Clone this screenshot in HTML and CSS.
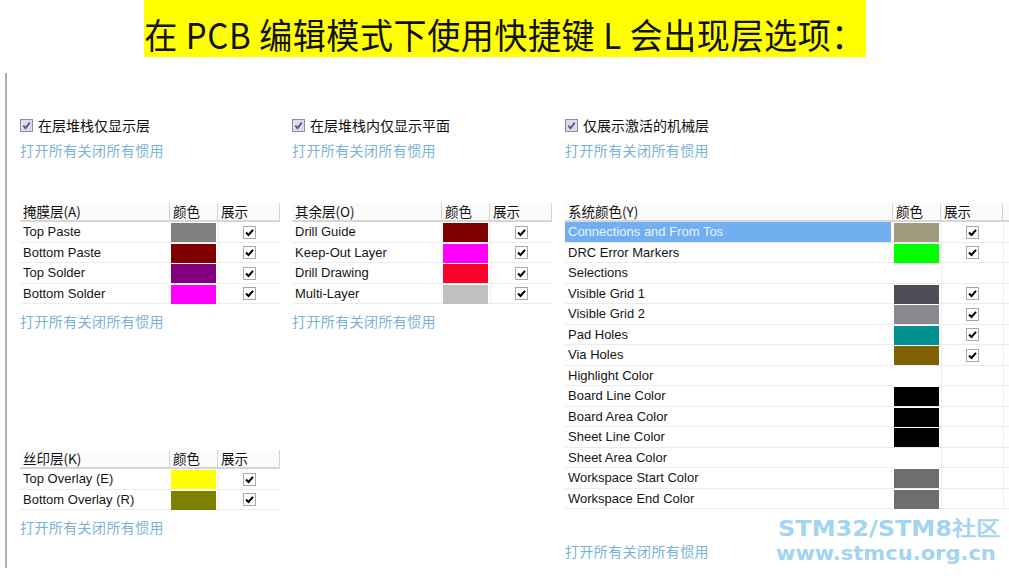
FILE: index.html
```html
<!DOCTYPE html>
<html lang="zh-CN">
<head>
<meta charset="utf-8">
<title>PCB 层选项</title>
<link rel="stylesheet" href="styles.css">
</head>
<body>
<div class="banner"><span class="banner-text">在 PCB 编辑模式下使用快捷键 L 会出现层选项：</span></div>

<div class="panel">
  <!-- Column 1 -->
  <div class="col">
    <div class="opt"><svg class="optbox" width="13" height="13" viewBox="0 0 13 13"><rect x=".5" y=".5" width="12" height="12" fill="#dcdde6" stroke="#8b8d9c"/><path d="M3.3 6.6l2.2 2.6 4.2-5.6" fill="none" stroke="#4b5a96" stroke-width="1.8"/></svg><span>在层堆栈仅显示层</span></div>
    <div class="link link-top">打开所有关闭所有惯用</div>

    <div class="tbl t1">
      <div class="hdr"><div class="c">掩膜层(A)</div><div class="c">颜色</div><div class="c">展示</div></div>
      <div class="row"><div class="n">Top Paste</div><div class="cc"><div class="sw" style="background:#808080"></div></div><div class="sc"><svg width="13" height="13" viewBox="0 0 13 13"><rect x=".5" y=".5" width="12" height="12" fill="#fff" stroke="#a8a8a8"/><path d="M3 6.5l2.5 2.5 4.5-5.2" fill="none" stroke="#000" stroke-width="2"/></svg></div></div>
      <div class="row"><div class="n">Bottom Paste</div><div class="cc"><div class="sw" style="background:#800000"></div></div><div class="sc"><svg width="13" height="13" viewBox="0 0 13 13"><rect x=".5" y=".5" width="12" height="12" fill="#fff" stroke="#a8a8a8"/><path d="M3 6.5l2.5 2.5 4.5-5.2" fill="none" stroke="#000" stroke-width="2"/></svg></div></div>
      <div class="row"><div class="n">Top Solder</div><div class="cc"><div class="sw" style="background:#800080"></div></div><div class="sc"><svg width="13" height="13" viewBox="0 0 13 13"><rect x=".5" y=".5" width="12" height="12" fill="#fff" stroke="#a8a8a8"/><path d="M3 6.5l2.5 2.5 4.5-5.2" fill="none" stroke="#000" stroke-width="2"/></svg></div></div>
      <div class="row"><div class="n">Bottom Solder</div><div class="cc"><div class="sw" style="background:#ff00ff"></div></div><div class="sc"><svg width="13" height="13" viewBox="0 0 13 13"><rect x=".5" y=".5" width="12" height="12" fill="#fff" stroke="#a8a8a8"/><path d="M3 6.5l2.5 2.5 4.5-5.2" fill="none" stroke="#000" stroke-width="2"/></svg></div></div>
    </div>
    <div class="link link-after">打开所有关闭所有惯用</div>

    <div class="tbl t1 silk">
      <div class="hdr"><div class="c">丝印层(K)</div><div class="c">颜色</div><div class="c">展示</div></div>
      <div class="row"><div class="n">Top Overlay (E)</div><div class="cc"><div class="sw" style="background:#ffff00"></div></div><div class="sc"><svg width="13" height="13" viewBox="0 0 13 13"><rect x=".5" y=".5" width="12" height="12" fill="#fff" stroke="#a8a8a8"/><path d="M3 6.5l2.5 2.5 4.5-5.2" fill="none" stroke="#000" stroke-width="2"/></svg></div></div>
      <div class="row"><div class="n">Bottom Overlay (R)</div><div class="cc"><div class="sw" style="background:#808000"></div></div><div class="sc"><svg width="13" height="13" viewBox="0 0 13 13"><rect x=".5" y=".5" width="12" height="12" fill="#fff" stroke="#a8a8a8"/><path d="M3 6.5l2.5 2.5 4.5-5.2" fill="none" stroke="#000" stroke-width="2"/></svg></div></div>
    </div>
    <div class="link link-after">打开所有关闭所有惯用</div>
  </div>

  <!-- Column 2 -->
  <div class="col">
    <div class="opt"><svg class="optbox" width="13" height="13" viewBox="0 0 13 13"><rect x=".5" y=".5" width="12" height="12" fill="#dcdde6" stroke="#8b8d9c"/><path d="M3.3 6.6l2.2 2.6 4.2-5.6" fill="none" stroke="#4b5a96" stroke-width="1.8"/></svg><span>在层堆栈内仅显示平面</span></div>
    <div class="link link-top">打开所有关闭所有惯用</div>

    <div class="tbl t1">
      <div class="hdr"><div class="c">其余层(O)</div><div class="c">颜色</div><div class="c">展示</div></div>
      <div class="row"><div class="n">Drill Guide</div><div class="cc"><div class="sw" style="background:#800000"></div></div><div class="sc"><svg width="13" height="13" viewBox="0 0 13 13"><rect x=".5" y=".5" width="12" height="12" fill="#fff" stroke="#a8a8a8"/><path d="M3 6.5l2.5 2.5 4.5-5.2" fill="none" stroke="#000" stroke-width="2"/></svg></div></div>
      <div class="row"><div class="n">Keep-Out Layer</div><div class="cc"><div class="sw" style="background:#ff00ff"></div></div><div class="sc"><svg width="13" height="13" viewBox="0 0 13 13"><rect x=".5" y=".5" width="12" height="12" fill="#fff" stroke="#a8a8a8"/><path d="M3 6.5l2.5 2.5 4.5-5.2" fill="none" stroke="#000" stroke-width="2"/></svg></div></div>
      <div class="row"><div class="n">Drill Drawing</div><div class="cc"><div class="sw" style="background:#ff002a"></div></div><div class="sc"><svg width="13" height="13" viewBox="0 0 13 13"><rect x=".5" y=".5" width="12" height="12" fill="#fff" stroke="#a8a8a8"/><path d="M3 6.5l2.5 2.5 4.5-5.2" fill="none" stroke="#000" stroke-width="2"/></svg></div></div>
      <div class="row"><div class="n">Multi-Layer</div><div class="cc"><div class="sw" style="background:#c0c0c0"></div></div><div class="sc"><svg width="13" height="13" viewBox="0 0 13 13"><rect x=".5" y=".5" width="12" height="12" fill="#fff" stroke="#a8a8a8"/><path d="M3 6.5l2.5 2.5 4.5-5.2" fill="none" stroke="#000" stroke-width="2"/></svg></div></div>
    </div>
    <div class="link link-after">打开所有关闭所有惯用</div>
  </div>

  <!-- Column 3 -->
  <div class="col">
    <div class="opt"><svg class="optbox" width="13" height="13" viewBox="0 0 13 13"><rect x=".5" y=".5" width="12" height="12" fill="#dcdde6" stroke="#8b8d9c"/><path d="M3.3 6.6l2.2 2.6 4.2-5.6" fill="none" stroke="#4b5a96" stroke-width="1.8"/></svg><span>仅展示激活的机械层</span></div>
    <div class="link link-top">打开所有关闭所有惯用</div>

    <div class="tbl t3">
      <div class="hdr"><div class="c">系统颜色(Y)</div><div class="c">颜色</div><div class="c">展示</div><div class="c fill"></div></div>
      <div class="row"><div class="n sel">Connections and From Tos</div><div class="cc"><div class="sw" style="background:#9e9b7e"></div></div><div class="sc"><svg width="13" height="13" viewBox="0 0 13 13"><rect x=".5" y=".5" width="12" height="12" fill="#fff" stroke="#a8a8a8"/><path d="M3 6.5l2.5 2.5 4.5-5.2" fill="none" stroke="#000" stroke-width="2"/></svg></div><div class="f"></div></div>
      <div class="row"><div class="n">DRC Error Markers</div><div class="cc"><div class="sw" style="background:#00ff00"></div></div><div class="sc"><svg width="13" height="13" viewBox="0 0 13 13"><rect x=".5" y=".5" width="12" height="12" fill="#fff" stroke="#a8a8a8"/><path d="M3 6.5l2.5 2.5 4.5-5.2" fill="none" stroke="#000" stroke-width="2"/></svg></div><div class="f"></div></div>
      <div class="row"><div class="n">Selections</div><div class="cc"><div class="sw" style="background:#ffffff"></div></div><div class="sc"></div><div class="f"></div></div>
      <div class="row"><div class="n">Visible Grid 1</div><div class="cc"><div class="sw" style="background:#4e4e56"></div></div><div class="sc"><svg width="13" height="13" viewBox="0 0 13 13"><rect x=".5" y=".5" width="12" height="12" fill="#fff" stroke="#a8a8a8"/><path d="M3 6.5l2.5 2.5 4.5-5.2" fill="none" stroke="#000" stroke-width="2"/></svg></div><div class="f"></div></div>
      <div class="row"><div class="n">Visible Grid 2</div><div class="cc"><div class="sw" style="background:#8a888e"></div></div><div class="sc"><svg width="13" height="13" viewBox="0 0 13 13"><rect x=".5" y=".5" width="12" height="12" fill="#fff" stroke="#a8a8a8"/><path d="M3 6.5l2.5 2.5 4.5-5.2" fill="none" stroke="#000" stroke-width="2"/></svg></div><div class="f"></div></div>
      <div class="row"><div class="n">Pad Holes</div><div class="cc"><div class="sw" style="background:#009090"></div></div><div class="sc"><svg width="13" height="13" viewBox="0 0 13 13"><rect x=".5" y=".5" width="12" height="12" fill="#fff" stroke="#a8a8a8"/><path d="M3 6.5l2.5 2.5 4.5-5.2" fill="none" stroke="#000" stroke-width="2"/></svg></div><div class="f"></div></div>
      <div class="row"><div class="n">Via Holes</div><div class="cc"><div class="sw" style="background:#806000"></div></div><div class="sc"><svg width="13" height="13" viewBox="0 0 13 13"><rect x=".5" y=".5" width="12" height="12" fill="#fff" stroke="#a8a8a8"/><path d="M3 6.5l2.5 2.5 4.5-5.2" fill="none" stroke="#000" stroke-width="2"/></svg></div><div class="f"></div></div>
      <div class="row"><div class="n">Highlight Color</div><div class="cc"><div class="sw" style="background:#ffffff"></div></div><div class="sc"></div><div class="f"></div></div>
      <div class="row"><div class="n">Board Line Color</div><div class="cc"><div class="sw" style="background:#000000"></div></div><div class="sc"></div><div class="f"></div></div>
      <div class="row"><div class="n">Board Area Color</div><div class="cc"><div class="sw" style="background:#000000"></div></div><div class="sc"></div><div class="f"></div></div>
      <div class="row"><div class="n">Sheet Line Color</div><div class="cc"><div class="sw" style="background:#000000"></div></div><div class="sc"></div><div class="f"></div></div>
      <div class="row"><div class="n">Sheet Area Color</div><div class="cc"><div class="sw" style="background:#ffffff"></div></div><div class="sc"></div><div class="f"></div></div>
      <div class="row"><div class="n">Workspace Start Color</div><div class="cc"><div class="sw" style="background:#6e6e6e"></div></div><div class="sc"></div><div class="f"></div></div>
      <div class="row"><div class="n">Workspace End Color</div><div class="cc"><div class="sw" style="background:#6e6e6e"></div></div><div class="sc"></div><div class="f"></div></div>
    </div>
    <div class="link link-sys">打开所有关闭所有惯用</div>
  </div>
</div>

<div class="watermark">
  <div class="wm1">STM32/STM8社区</div>
  <div class="wm2">www.stmcu.org.cn</div>
</div>
</body>
</html>
```

FILE: styles.css
```css
* { box-sizing: border-box; }

html, body {
  margin: 0;
  padding: 0;
  background: #ffffff;
}

body {
  width: 1009px;
  height: 579px;
  overflow: hidden;
  position: relative;
  font-family: "Liberation Sans", "Noto Sans CJK SC", sans-serif;
  font-size: 13px;
  color: #111;
}

/* ---------- Banner ---------- */
.banner {
  width: 722px;
  height: 57px;
  margin: 0 auto;
  background: #ffff00;
  display: flex;
  align-items: center;
  justify-content: center;
  padding-top: 12px;
}

.banner-text {
  font-family: "Noto Sans CJK SC", sans-serif;
  font-size: 33px;
  line-height: 33px;
  color: #111;
  white-space: nowrap;
  letter-spacing: 0.6px;
  display: inline-block;
  transform: scaleY(1.08);
}

/* ---------- Panel ---------- */
.panel {
  margin-top: 16px;
  margin-left: 5px;
  height: 495px;
  border-left: 2px solid #b0b0b0;
  padding-left: 13px;
  display: grid;
  grid-template-columns: 272px 273px 1fr;
}

.col {
  display: flex;
  flex-direction: column;
  padding-top: 43px;
}

.opt {
  height: 18px;
  display: flex;
  align-items: center;
  gap: 5px;
  font-family: "Noto Sans CJK SC", sans-serif;
  font-size: 14px;
  color: #111;
  white-space: nowrap;
}

.optbox { flex: none; }

.link {
  height: 18px;
  line-height: 18px;
  font-family: "Noto Sans CJK SC", sans-serif;
  font-size: 14px;
  letter-spacing: 0.4px;
  color: #7ab2da;
  white-space: nowrap;
}

.link-top { margin-top: 7px; }
.link-after { margin-top: 8px; }
.link-sys { margin-top: 33px; }

/* ---------- Tables ---------- */
.tbl { margin-top: 44px; }
.tbl.silk { margin-top: 120px; }

.hdr, .row {
  display: grid;
}

.t1 .hdr, .t1 .row { grid-template-columns: 150px 48px 62px; width: 260px; }
.t3 .hdr, .t3 .row { grid-template-columns: 328px 48px 62px 6px; width: 444px; }

.hdr {
  height: 19px;
  background: #fbfbfb;
  border-bottom: 2px solid #d6d6d6;
}

.hdr .c {
  padding-left: 3px;
  line-height: 17px;
  font-family: "Noto Sans CJK SC", sans-serif;
  font-size: 13.5px;
  color: #111;
  border-right: 1px solid #d4d4d4;
  white-space: nowrap;
}

.hdr .c.fill { border-right: none; }

.row {
  height: 20.5px;
  border-bottom: 1px solid #ececec;
}

.n {
  padding-left: 3px;
  line-height: 20px;
  white-space: nowrap;
  font-size: 13px;
  color: #151515;
}

.n.sel {
  background: #72aff0;
  color: #eaf2ff;
  margin-right: 2px;
}

.cc {
  padding: 1px 2px 0 1px;
}

.sw {
  height: 100%;
}

.sc {
  display: flex;
  align-items: center;
  justify-content: center;
  border-left: 1px solid #efefef;
}

.f { border-left: 1px solid #efefef; }

/* ---------- Watermark ---------- */
.watermark {
  position: absolute;
  left: 776px;
  top: 518px;
  font-family: "DejaVu Sans", sans-serif;
  font-weight: bold;
  color: #a3d4f0;
  white-space: nowrap;
}

.wm1 {
  font-size: 24px;
  line-height: 26px;
  padding-left: 2px;
  transform: scaleY(0.85);
  transform-origin: left top;
}

.wm2 {
  font-size: 21px;
  line-height: 22px;
  transform: scaleY(0.9);
  transform-origin: left top;
}
```
